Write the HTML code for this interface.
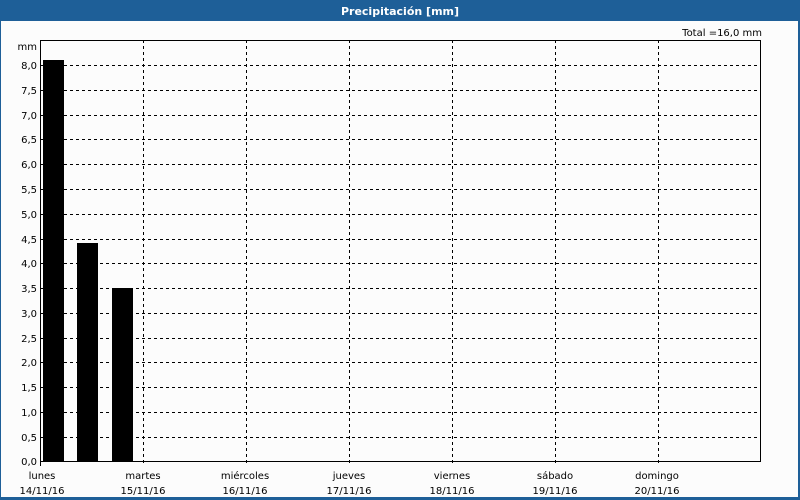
<!DOCTYPE html>
<html><head><meta charset="utf-8"><style>
html,body{margin:0;padding:0;width:800px;height:500px;overflow:hidden;background:#1e5f98}
svg{display:block}
text{font-family:"DejaVu Sans","Liberation Sans",sans-serif;font-size:10px;fill:#000}
</style></head><body>
<svg width="800" height="500" xmlns="http://www.w3.org/2000/svg">
<rect x="0" y="0" width="800" height="500" fill="#1e5f98"/>
<rect x="1" y="21" width="797" height="476" fill="#fcfcfc"/>
<text x="400" y="15" text-anchor="middle" style="font-weight:bold;fill:#fff;font-size:11px">Precipitación [mm]</text>
<text x="762" y="36" text-anchor="end">Total =16,0 mm</text>
<text x="37" y="50" text-anchor="end">mm</text>
<g stroke="#000" stroke-width="1" stroke-dasharray="3,3" shape-rendering="crispEdges">
<line x1="40" y1="65.5" x2="761" y2="65.5"/><line x1="40" y1="90.5" x2="761" y2="90.5"/><line x1="40" y1="115.5" x2="761" y2="115.5"/><line x1="40" y1="139.5" x2="761" y2="139.5"/><line x1="40" y1="164.5" x2="761" y2="164.5"/><line x1="40" y1="189.5" x2="761" y2="189.5"/><line x1="40" y1="214.5" x2="761" y2="214.5"/><line x1="40" y1="239.5" x2="761" y2="239.5"/><line x1="40" y1="263.5" x2="761" y2="263.5"/><line x1="40" y1="288.5" x2="761" y2="288.5"/><line x1="40" y1="313.5" x2="761" y2="313.5"/><line x1="40" y1="338.5" x2="761" y2="338.5"/><line x1="40" y1="362.5" x2="761" y2="362.5"/><line x1="40" y1="387.5" x2="761" y2="387.5"/><line x1="40" y1="412.5" x2="761" y2="412.5"/><line x1="40" y1="437.5" x2="761" y2="437.5"/>
<line x1="143.5" y1="40" x2="143.5" y2="466"/><line x1="246.5" y1="40" x2="246.5" y2="466"/><line x1="349.5" y1="40" x2="349.5" y2="466"/><line x1="452.5" y1="40" x2="452.5" y2="466"/><line x1="555.5" y1="40" x2="555.5" y2="466"/><line x1="658.5" y1="40" x2="658.5" y2="466"/>
</g>
<g fill="#000">
<rect x="43" y="60" width="21" height="401"/>
<rect x="77" y="243" width="21" height="218"/>
<rect x="112" y="288" width="21" height="173"/>
</g>
<rect x="40.5" y="40.5" width="720" height="421" fill="none" stroke="#000" shape-rendering="crispEdges"/>
<line x1="40.5" y1="461" x2="40.5" y2="466" stroke="#000" shape-rendering="crispEdges"/>
<g text-anchor="end">
<text x="37" y="69">8,0</text><text x="37" y="94">7,5</text><text x="37" y="119">7,0</text><text x="37" y="143">6,5</text><text x="37" y="168">6,0</text><text x="37" y="193">5,5</text><text x="37" y="218">5,0</text><text x="37" y="243">4,5</text><text x="37" y="267">4,0</text><text x="37" y="292">3,5</text><text x="37" y="317">3,0</text><text x="37" y="342">2,5</text><text x="37" y="366">2,0</text><text x="37" y="391">1,5</text><text x="37" y="416">1,0</text><text x="37" y="441">0,5</text><text x="37" y="465">0,0</text>
</g>
<g text-anchor="middle">
<text x="42" y="479">lunes</text><text x="42" y="494">14/11/16</text>
<text x="143" y="479">martes</text><text x="143" y="494">15/11/16</text>
<text x="245" y="479">miércoles</text><text x="245" y="494">16/11/16</text>
<text x="349" y="479">jueves</text><text x="349" y="494">17/11/16</text>
<text x="452" y="479">viernes</text><text x="452" y="494">18/11/16</text>
<text x="555" y="479">sábado</text><text x="555" y="494">19/11/16</text>
<text x="657" y="479">domingo</text><text x="657" y="494">20/11/16</text>
</g>
</svg>
</body></html>
